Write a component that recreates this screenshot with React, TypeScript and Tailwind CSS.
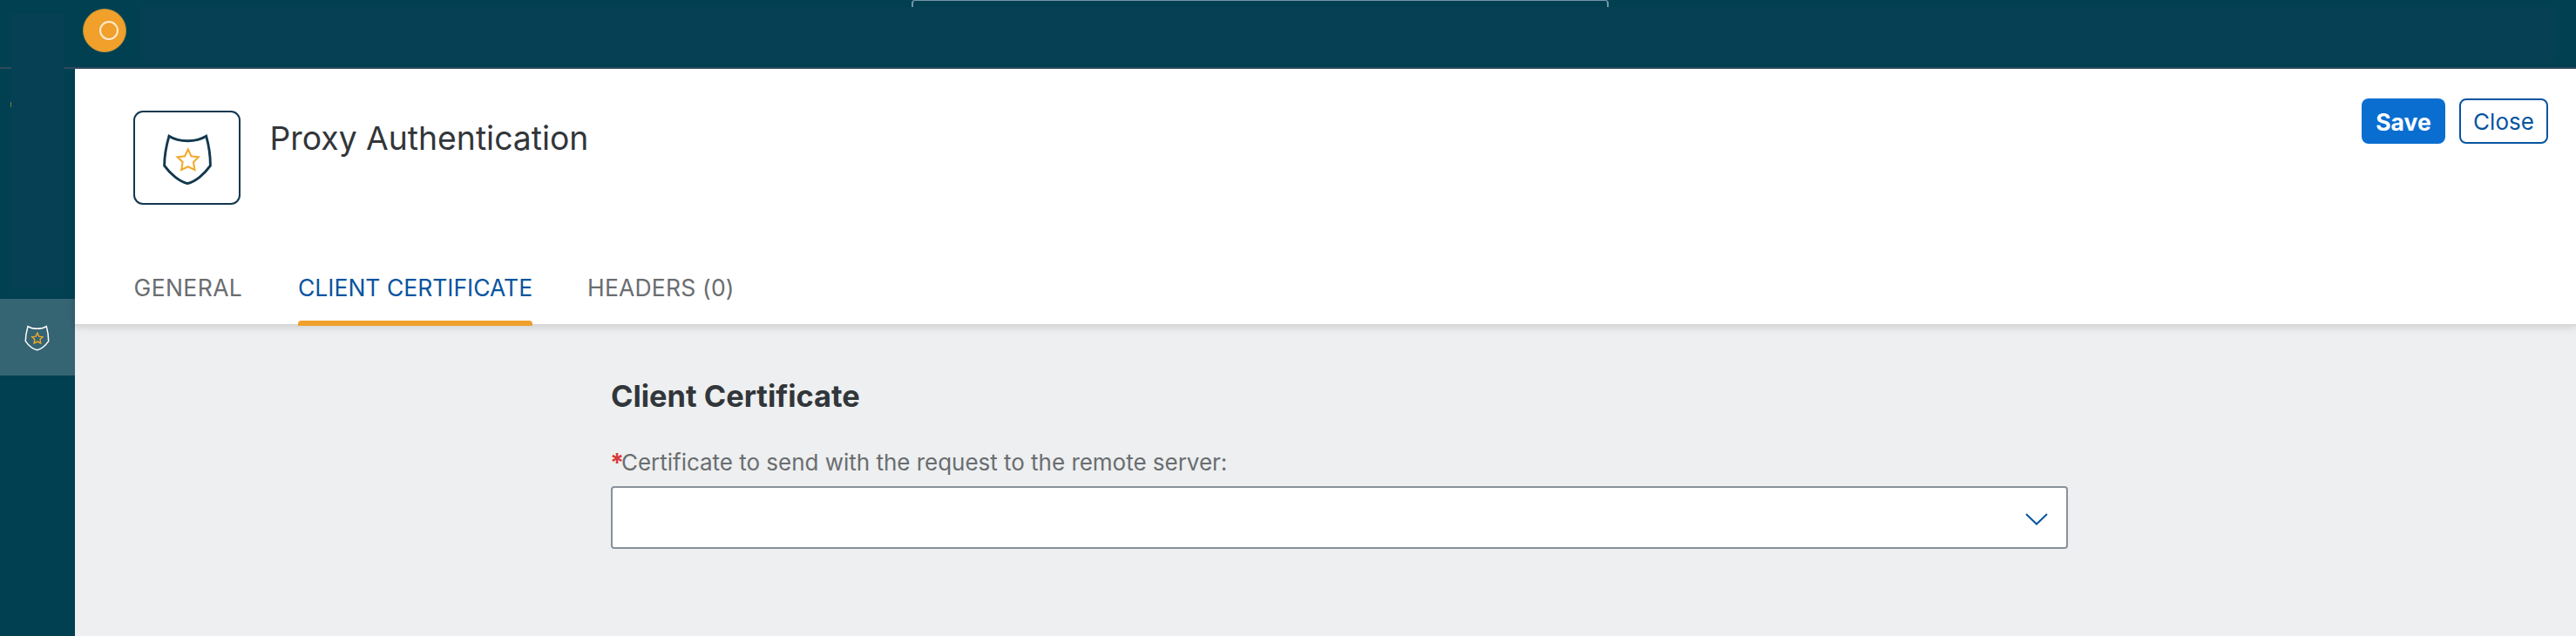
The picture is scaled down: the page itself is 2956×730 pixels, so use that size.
import React from "react";

function ShieldIcon({ className, stroke, width, star }: { className: string; stroke: string; width: number; star: number }) {
  return (
    <svg className={className} viewBox="0 0 58 60" fill="none" aria-hidden="true">
      <path
        d="M8 3.2C15 7.6 22 8.7 29.3 8.7S43.6 7.6 50.6 3.2C53.4 13 55.4 26 55.4 37.2C48.500 47 38 55.500 29.2 57.600C20.500 55.500 9.500 47 2.600 37.200C2.600 26 5.200 13 8 3.200Z"
        stroke={stroke}
        strokeWidth={width}
      />
      <path
        d="M29.800 18.400L33.400 26.200L41.800 27.300L36 33L37.400 41.900L29.800 38.200L22.200 41.900L23.600 33L17.600 27.300L26.200 26.200Z"
        stroke="#f3a92b"
        strokeWidth={star}
      />
    </svg>
  );
}

function Sidebar() {
  return (
    <aside className="flex w-[86px] shrink-0 flex-col bg-[#004051]">
      <div className="flex h-[343px] pt-4">
        <div className="flex w-[13px] flex-col items-end">
          <div className="mt-[61px] h-0.5 w-full bg-[#2f4a5f]" />
          <div className="mt-[38px] h-1.5 w-px bg-[#7f7a35]" />
        </div>
        <div className="h-[315px] w-[60px] bg-[#064055]" />
        <div className="mt-[61px] h-0.5 flex-1 bg-[#2f4a5f]" />
      </div>
      <div className="flex h-[88px] bg-[#356473] pt-[30px] pl-[27.5px]">
        <ShieldIcon className="h-[30px] w-[29px]" stroke="#ffffff" width={3} star={2.8} />
      </div>
    </aside>
  );
}

function TopBar() {
  return (
    <header className="flex h-[79px] shrink-0 border-b-2 border-[#2f4a5f] bg-[#004051]">
      <div className="mt-2.5 ml-[9px] flex size-[50px] items-center justify-end rounded-full border border-[#b8923a] bg-[#f0a02b] pr-2">
        <div className="size-[22px] rounded-full border-2 border-[#fdebd0]" />
      </div>
      <div className="ml-4 flex w-[2772px] flex-col">
        <div className="ml-[885px] h-2 w-[800px] rounded-t-sm border-x-2 border-t border-[#7496ab]" />
        <div className="h-16 bg-[#064055]" />
      </div>
    </header>
  );
}

function ObjectHeader() {
  return (
    <section className="relative z-10 flex h-[295px] shrink-0 flex-col bg-white shadow-[0_2px_8px_rgba(0,0,0,0.13)]">
      <div className="flex h-[234px] items-start pr-8">
        <div className="mt-12 ml-[66.5px] flex h-[108px] w-[123px] rounded-[11px] border-2 border-[#12384f] pt-6 pl-[31px]">
          <ShieldIcon className="h-[60px] w-[58px]" stroke="#12384f" width={2.9} star={2.1} />
        </div>
        <h1 className="mt-14 ml-[34px] text-[37.3px] leading-[48px] text-[#32363a]">Proxy Authentication</h1>
        <button className="mt-[34px] ml-auto flex h-[52px] w-24 items-center justify-center rounded-lg bg-[#0a6ed1] pt-px text-[26.5px] leading-9 font-bold text-white">
          Save
        </button>
        <button className="mt-[34px] ml-4 flex h-[52px] w-[102px] items-center justify-center rounded-lg border-2 border-[#0854a0] bg-white pt-px text-[26px] leading-9 text-[#0854a0]">
          Close
        </button>
      </div>
      <nav className="flex h-[61px] shrink-0 pl-[67.5px] text-[26.5px] leading-[35px] whitespace-nowrap text-[#6a6d70] shadow-[inset_0_-2px_0_#d9d9d9]">
        <a className="w-[188.5px] tracking-[0.4px]">GENERAL</a>
        <a className="flex w-[269px] flex-col justify-between text-[#0854a0]">
          <span>CLIENT CERTIFICATE</span>
          <span className="h-1.5 rounded-t bg-[#f0a02b]" />
        </a>
        <a className="ml-[63px] tracking-[0.2px]">HEADERS (0)</a>
      </nav>
    </section>
  );
}

function CertificateForm() {
  return (
    <main className="flex-1 bg-[#edeff0] pt-[57px] pl-[615px]">
      <h2 className="text-[34.4px] leading-[48px] font-bold text-[#32363a]">Client Certificate</h2>
      <label className="mt-[34px] flex h-[45px] text-[26px] leading-9 tracking-[-0.02px] text-[#6a6d70]">
        <span className="-ml-px w-[13px] text-[29px] font-bold text-[#d93a3a]">*</span>
        Certificate to send with the request to the remote server:
      </label>
      <div className="flex h-[72px] w-[1672px] items-center justify-end rounded border-2 border-[#89919a] bg-white pr-[21px]">
        <svg className="mt-1 h-[14px] w-[26px]" viewBox="0 0 26 14" fill="none" aria-hidden="true">
          <path d="M1 1L13 12.500L25 1" stroke="#0854a0" strokeWidth="2" />
        </svg>
      </div>
    </main>
  );
}

export default function App() {
  return (
    <div className="flex h-[730px] w-[2956px] overflow-hidden font-['Inter',sans-serif]">
      <Sidebar />
      <div className="flex flex-1 flex-col">
        <TopBar />
        <ObjectHeader />
        <CertificateForm />
      </div>
    </div>
  );
}
